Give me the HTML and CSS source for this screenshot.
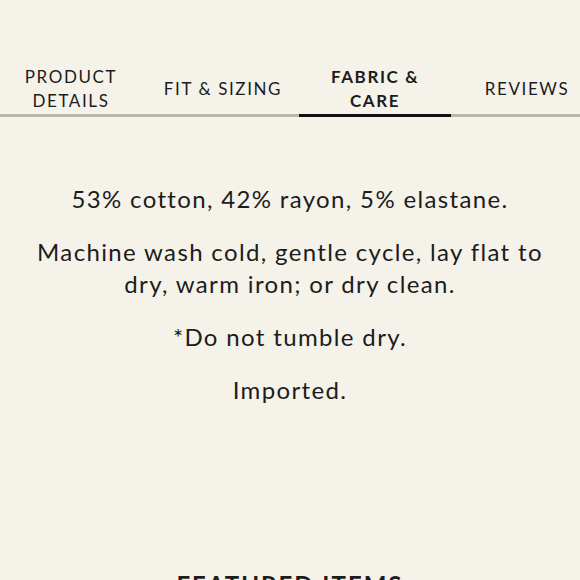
FILE: index.html
```html
<!DOCTYPE html>
<html>
<head>
<meta charset="utf-8">
<link rel="stylesheet" href="styles.css">
</head>
<body>
<nav class="tabs">
  <div class="tab">PRODUCT<br>DETAILS</div>
  <div class="tab">FIT &amp; SIZING</div>
  <div class="tab active">FABRIC &amp;<br>CARE</div>
  <div class="tab">REVIEWS</div>
</nav>
<section class="panel">
  <p>53% cotton, 42% rayon, 5% elastane.</p>
  <p>Machine wash cold, gentle cycle, lay flat to dry, warm iron; or dry clean.</p>
  <p>*Do not tumble dry.</p>
  <p>Imported.</p>
</section>
<h2 class="featured">FEATURED ITEMS</h2>
</body>
</html>
```
FILE: styles.css
```css
html, body {
  margin: 0;
  padding: 0;
  background: #f5f2ea;
  color: #1c1c1c;
  font-family: "Lato", "Noto Sans", sans-serif;
  overflow: hidden;
}
.tabs {
  display: flex;
  margin-top: 63px;
  margin-left: -5px;
  width: 610px;
  border-bottom: 3px solid #bbb7ae;
}
.tab {
  flex: 0 0 152px;
  height: 51px;
  display: flex;
  align-items: center;
  justify-content: center;
  text-align: center;
  font-size: 17px;
  line-height: 24px;
  letter-spacing: 1.6px;
  margin-bottom: -3px;
  border-bottom: 3px solid transparent;
}
.tab.active {
  font-weight: 700;
  border-bottom-color: #111;
}
.panel {
  padding: 66px 20px 0;
  text-align: center;
}
.panel p {
  margin: 0 0 21px;
  font-size: 24px;
  line-height: 32px;
  letter-spacing: 1.35px;
}
.featured {
  margin: 164px 0 0;
  text-align: center;
  font-size: 24px;
  letter-spacing: 2px;
  font-weight: 700;
}
```
